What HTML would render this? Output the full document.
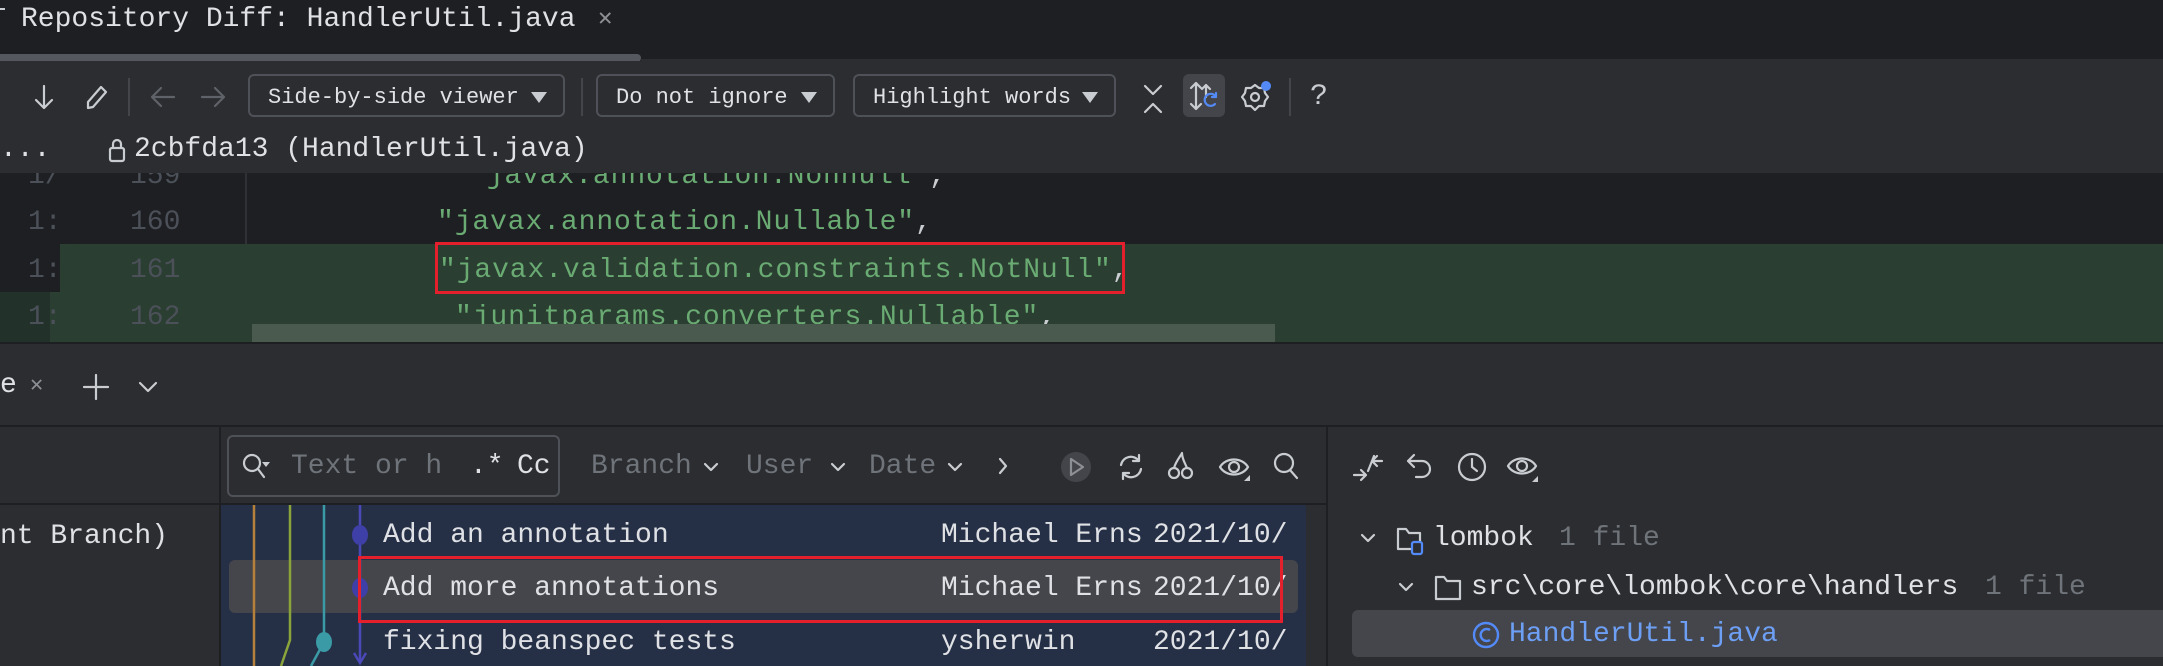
<!DOCTYPE html>
<html><head><meta charset="utf-8"><style>
*{margin:0;padding:0;box-sizing:border-box}
body{width:2163px;height:666px;overflow:hidden;background:#1e1f22;font-family:"Liberation Mono",monospace;font-size:28px;color:#dfe1e5;position:relative}
.a{position:absolute;white-space:pre;line-height:1}
.combo{position:absolute;top:74px;height:43px;border:2px solid #4e5157;border-radius:6px;font-size:22px;color:#dfe1e5;padding:9px 0 0 18px;white-space:pre}
.combo:after{content:"";position:absolute;right:16px;top:16px;border-left:8px solid transparent;border-right:8px solid transparent;border-top:11px solid #c9ccd1}
svg{position:absolute;overflow:visible}
.s{fill:none;stroke:#c9ccd1;stroke-width:2.2;stroke-linecap:round;stroke-linejoin:round}
.g{color:#6aab73;letter-spacing:0.9px}
.ln{color:#4b5059}
.dim{color:#6f737a}
</style></head><body>
<div class="a" style="left:0;top:0;width:2163px;height:60px;background:#1e1f22"></div>
<div class="a" style="left:0;top:8px;width:5px;height:2px;background:#c9ccd1"></div>
<div class="a" style="left:21px;top:6px;color:#dfe1e5">Repository Diff: HandlerUtil.java</div>
<div class="a" style="left:598px;top:8px;color:#8c8f94;font-size:24px">✕</div>
<div class="a" style="left:0;top:54px;width:641px;height:8px;background:#55585e;border-radius:0 4px 4px 0"></div>
<div class="a" style="left:641px;top:59px;width:1522px;height:2px;background:#2b2d30"></div>
<div class="a" style="left:0;top:61px;width:2163px;height:112px;background:#2b2d30"></div>
<svg style="left:33px;top:84px" width="22" height="26"><path class="s" d="M11 2V24M3 16L11 24L19 16"/></svg>
<svg style="left:84px;top:84px" width="24" height="26"><path class="s" d="M4 24L4 18L17 3L22 8L9 23Z"/></svg>
<div class="a" style="left:128px;top:78px;width:2px;height:38px;background:#43454a"></div>
<svg style="left:150px;top:86px" width="26" height="22"><path class="s" style="stroke:#5f6268" d="M24 11H2M11 2L2 11L11 20"/></svg>
<svg style="left:200px;top:86px" width="26" height="22"><path class="s" style="stroke:#5f6268" d="M2 11H24M15 2L24 11L15 20"/></svg>
<div class="combo" style="left:248px;width:317px">Side-by-side viewer</div>
<div class="a" style="left:581px;top:78px;width:2px;height:38px;background:#43454a"></div>
<div class="combo" style="left:596px;width:239px">Do not ignore</div>
<div class="combo" style="left:853px;width:263px">Highlight words</div>
<svg style="left:1142px;top:84px" width="22" height="30"><path class="s" d="M3 2L11 10L19 2M3 28L11 20L19 28"/></svg>
<div class="a" style="left:1183px;top:74px;width:42px;height:43px;background:#43454a;border-radius:6px"></div>
<svg style="left:1190px;top:81px" width="30" height="32"><path class="s" d="M6 2V28M1 7L6 2L11 7M1 23L6 28L11 23M16 4V16M12 8L16 4L20 8"/><path class="s" style="stroke:#548af7" d="M26 16A6 6 0 1 0 25 23M26 12V16H22"/></svg>
<svg style="left:1240px;top:82px" width="30" height="32"><path class="s" d="M15 3L19 6L24 6L25 11L28 15L25 19L24 24L19 24L15 28L11 24L6 24L5 19L2 15L5 11L6 6L11 6Z"/><circle class="s" cx="15" cy="15" r="4"/><circle cx="26" cy="4" r="5" fill="#548af7"/></svg>
<div class="a" style="left:1289px;top:78px;width:2px;height:38px;background:#43454a"></div>
<div class="a" style="left:1310px;top:82px;font-size:30px;color:#c9ccd1">?</div>
<div class="a" style="left:0;top:136px">...</div>
<svg style="left:108px;top:137px" width="18" height="26"><rect class="s" x="2" y="11" width="14" height="13" rx="2"/><path class="s" d="M5 11V7A4 4 0 0 1 13 7V11"/></svg>
<div class="a" style="left:134px;top:136px">2cbfda13 (HandlerUtil.java)</div>
<div class="a" style="left:0;top:173px;width:2163px;height:169px;background:#1e1f22;overflow:hidden">
  <div class="a" style="left:245px;top:0;width:2px;height:71px;background:#2f3136"></div>
  <div class="a" style="left:60px;top:71px;width:2103px;height:98px;background:#2a3e31"></div>
  <svg style="left:40px;top:71px" width="40" height="98"><path d="M40 0C28 0 22 30 20 48L0 48L0 98L40 98Z" fill="#2a3e31"/></svg>
  <div class="a" style="left:0;top:119px;width:50px;height:50px;background:#22312a"></div>
  <div class="a ln" style="left:28px;top:-10px">1/</div><div class="a ln" style="left:130px;top:-10px">159</div>
  <div class="a g" style="left:469px;top:-10px">"javax.annotation.Nonnull"<span style="color:#c9ccd1">,</span></div>
  <div class="a ln" style="left:28px;top:36px">1:</div><div class="a ln" style="left:130px;top:36px">160</div>
  <div class="a g" style="left:437px;top:36px">"javax.annotation.Nullable"<span style="color:#c9ccd1">,</span></div>
  <div class="a ln" style="left:28px;top:84px">1:</div><div class="a ln" style="left:130px;top:84px">161</div>
  <div class="a g" style="left:439px;top:84px">"javax.validation.constraints.NotNull"<span style="color:#c9ccd1">,</span></div>
  <div class="a ln" style="left:28px;top:131px">1:</div><div class="a ln" style="left:130px;top:131px">162</div>
  <div class="a g" style="left:455px;top:131px">"junitparams.converters.Nullable"<span style="color:#c9ccd1">,</span></div>
  <div class="a" style="left:252px;top:151px;width:1023px;height:18px;background:#4a5a4e"></div>
</div>
<div class="a" style="left:435px;top:242px;width:690px;height:52px;border:3px solid #e3202b"></div>
<div class="a" style="left:0;top:344px;width:2163px;height:322px;background:#2b2d30"></div>
<div class="a" style="left:0;top:372px">e</div>
<div class="a" style="left:30px;top:375px;color:#8c8f94;font-size:22px">✕</div>
<svg style="left:84px;top:375px" width="24" height="24"><path class="s" d="M12 0V24M0 12H24"/></svg>
<svg style="left:138px;top:381px" width="20" height="12"><path class="s" d="M2 2L10 10L18 2"/></svg>
<div class="a" style="left:0;top:425px;width:2163px;height:2px;background:#1e1f22"></div>
<div class="a" style="left:219px;top:427px;width:2px;height:239px;background:#1e1f22"></div>
<div class="a" style="left:0;top:503px;width:1326px;height:2px;background:#1e1f22"></div>
<div class="a" style="left:1326px;top:427px;width:2px;height:239px;background:#1e1f22"></div>
<div class="a" style="left:227px;top:435px;width:333px;height:62px;border:2px solid #4e5157;border-radius:6px"></div>
<svg style="left:242px;top:453px" width="30" height="28"><circle class="s" cx="10" cy="10" r="8"/><path class="s" d="M16 16L22 24"/><path d="M20 9L28 9L24 14Z" fill="#c9ccd1"/></svg>
<div class="a dim" style="left:291px;top:453px">Text or h</div>
<div class="a" style="left:470px;top:453px">.*</div>
<div class="a" style="left:517px;top:453px">Cc</div>
<div class="a dim" style="left:591px;top:453px">Branch</div>
<div class="a dim" style="left:746px;top:453px">User</div>
<div class="a dim" style="left:869px;top:453px">Date</div>
<svg style="left:703px;top:462px" width="16" height="10"><path class="s" d="M2 2L8 8L14 2"/></svg>
<svg style="left:830px;top:462px" width="16" height="10"><path class="s" d="M2 2L8 8L14 2"/></svg>
<svg style="left:947px;top:462px" width="16" height="10"><path class="s" d="M2 2L8 8L14 2"/></svg>
<svg style="left:998px;top:457px" width="10" height="18"><path class="s" d="M2 2L8 9L2 16"/></svg>
<div class="a" style="left:1061px;top:452px;width:30px;height:30px;border-radius:50%;background:#43454a"></div>
<svg style="left:1068px;top:457px" width="18" height="20"><path class="s" style="stroke:#8c8f94" d="M3 2L15 10L3 18Z"/></svg>
<svg style="left:1116px;top:453px" width="30" height="28"><path class="s" d="M5 12A10 10 0 0 1 23 8M25 16A10 10 0 0 1 7 20M23 2V8H17M7 26V20H13"/></svg>
<svg style="left:1166px;top:451px" width="30" height="30"><circle class="s" cx="8" cy="22" r="5"/><circle class="s" cx="21" cy="22" r="5"/><path class="s" d="M8 17C10 10 14 6 16 2C16 8 19 12 21 17"/></svg>
<svg style="left:1218px;top:453px" width="34" height="30"><path class="s" d="M2 14C8 4 24 4 30 14C24 24 8 24 2 14Z"/><circle class="s" cx="16" cy="14" r="5"/><path d="M26 28L32 22L32 28Z" fill="#c9ccd1"/></svg>
<svg style="left:1272px;top:451px" width="28" height="30"><circle class="s" cx="12" cy="12" r="9"/><path class="s" d="M18 19L25 27"/></svg>
<div class="a" style="left:221px;top:505px;width:1085px;height:161px;background:#253047"></div>
<div class="a" style="left:229px;top:560px;width:1069px;height:53px;background:#45464b;border-radius:6px"></div>
<svg style="left:221px;top:505px" width="160" height="161"><path d="M33 0V161" stroke="#b5803a" stroke-width="2.5" fill="none"/><path d="M69 0V135L60 161" stroke="#8aa33a" stroke-width="2.5" fill="none"/><path d="M103 0V137L90 161" stroke="#3a9aa5" stroke-width="2.5" fill="none"/><path d="M139 0V156M133 148L139 158L145 148" stroke="#4b49b8" stroke-width="2.5" fill="none"/><ellipse cx="139" cy="30" rx="8" ry="10" fill="#3f3fa8"/><ellipse cx="139" cy="83" rx="8" ry="10" fill="#3f3fa8"/><ellipse cx="103" cy="137" rx="8" ry="10" fill="#3a9aa5"/></svg>
<div class="a" style="left:0;top:523px">nt Branch)</div>
<div class="a" style="left:383px;top:522px">Add an annotation</div>
<div class="a" style="left:941px;top:522px">Michael Erns</div>
<div class="a" style="left:1153px;top:522px">2021/10/</div>
<div class="a" style="left:383px;top:575px">Add more annotations</div>
<div class="a" style="left:941px;top:575px">Michael Erns</div>
<div class="a" style="left:1153px;top:575px">2021/10/</div>
<div class="a" style="left:383px;top:629px">fixing beanspec tests</div>
<div class="a" style="left:941px;top:629px">ysherwin</div>
<div class="a" style="left:1153px;top:629px">2021/10/</div>
<div class="a" style="left:358px;top:556px;width:925px;height:67px;border:3px solid #e3202b"></div>
<svg style="left:1352px;top:453px" width="34" height="30"><path class="s" d="M2 22H14M9 17L14 22L9 27M16 18L22 3M30 8H20M25 3L20 8L25 13"/></svg>
<svg style="left:1406px;top:453px" width="28" height="28"><path class="s" d="M8 2L2 8L8 14M2 8H16A8 8 0 0 1 16 24H10"/></svg>
<svg style="left:1457px;top:452px" width="30" height="30"><circle class="s" cx="15" cy="15" r="13"/><path class="s" d="M15 7V15L20 19"/></svg>
<svg style="left:1506px;top:452px" width="34" height="32"><path class="s" d="M2 14C8 4 24 4 30 14C24 24 8 24 2 14Z"/><circle class="s" cx="16" cy="14" r="5"/><path d="M26 30L32 24L32 30Z" fill="#c9ccd1"/></svg>
<svg style="left:1360px;top:533px" width="16" height="10"><path class="s" d="M2 2L8 8L14 2"/></svg>
<svg style="left:1396px;top:525px" width="32" height="30"><path class="s" d="M2 4H10L13 8H24V24H2Z"/><rect x="16" y="17" width="10" height="12" rx="2" fill="#2b2d30" stroke="#548af7" stroke-width="2.2"/></svg>
<div class="a" style="left:1433px;top:525px">lombok</div>
<div class="a dim" style="left:1559px;top:525px">1 file</div>
<svg style="left:1398px;top:582px" width="16" height="10"><path class="s" d="M2 2L8 8L14 2"/></svg>
<svg style="left:1434px;top:574px" width="30" height="28"><path class="s" d="M2 3H10L13 7H26V25H2Z"/></svg>
<div class="a" style="left:1471px;top:574px">src\core\lombok\core\handlers</div>
<div class="a dim" style="left:1985px;top:574px">1 file</div>
<div class="a" style="left:1352px;top:610px;width:811px;height:47px;background:#45464b;border-radius:6px 0 0 6px"></div>
<svg style="left:1472px;top:620px" width="28" height="30"><circle cx="14" cy="15" r="12" fill="none" stroke="#548af7" stroke-width="2.4"/><path d="M18 10A6 6 0 1 0 18 20" fill="none" stroke="#548af7" stroke-width="2.4"/></svg>
<div class="a" style="left:1509px;top:621px;color:#6d9ff5">HandlerUtil.java</div>
</body></html>
